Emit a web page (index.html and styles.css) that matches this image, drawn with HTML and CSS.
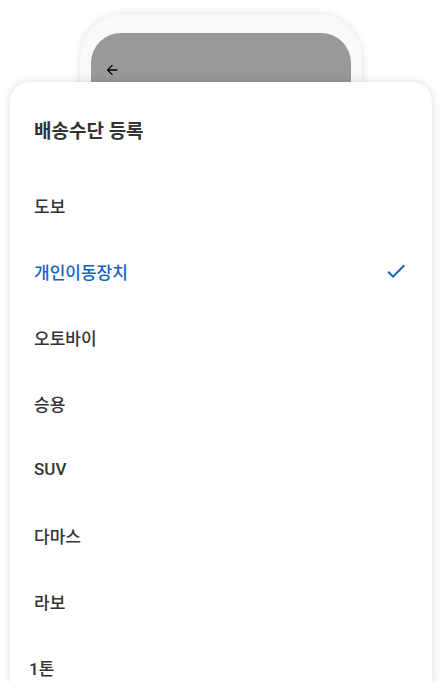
FILE: index.html
```html
<!DOCTYPE html>
<html lang="ko">
<head>
    <meta charset="UTF-8">
    <meta name="viewport" content="width=device-width, initial-scale=1.0">
    <title>배송수단 등록</title>
<link rel="stylesheet" href="styles.css">
</head>
<body>
    <div class="phone">
        <div class="screen">
            <svg class="back" viewBox="0 0 24 24" width="16" height="16">
                <path d="M20 11H7.83l5.59-5.59L12 4l-8 8 8 8 1.41-1.41L7.83 13H20v-2z"/>
            </svg>
        </div>
    </div>

    <div class="sheet">
        <h2 class="sheet-title">배송수단 등록</h2>
        <ul class="options">
            <li class="option">도보</li>
            <li class="option selected">
                <span>개인이동장치</span>
                <svg class="check" viewBox="0 0 24 24" width="24" height="24">
                    <path d="M9 16.17L4.83 12l-1.42 1.41L9 19 21 7l-1.41-1.41z"/>
                </svg>
            </li>
            <li class="option">오토바이</li>
            <li class="option">승용</li>
            <li class="option">SUV</li>
            <li class="option">다마스</li>
            <li class="option">라보</li>
            <li class="option shifted">1톤</li>
        </ul>
    </div>
</body>
</html>
```

FILE: styles.css
```css
/*page*/
body{
    margin: 0;
    height: 682px;
    overflow: hidden;
    background-color: #fff;
    font-family: Roboto, "Noto Sans CJK KR", sans-serif;
    color: #333;
}
/*phone behind the sheet*/
.phone{
    width: 282px;
    height: 300px;
    margin: 14px 0 0 80px;
    padding: 19px 11px 0;
    box-sizing: border-box;
    border-radius: 44px;
    background-color: #f9f9f9;
    box-shadow: 0 0 8px rgba(0, 0, 0, 0.12);
}
.screen{
    height: 100%;
    padding: 29px 0 0 13px;
    box-sizing: border-box;
    border-radius: 30px 30px 0 0;
    background-color: #999;
}
.back{
    display: block;
    fill: #000;
}
/*bottom sheet*/
.sheet{
    position: absolute;
    top: 82px;
    left: 10px;
    right: 10px;
    bottom: 0;
    overflow: hidden;
    padding: 36px 0 0;
    border-radius: 20px 20px 0 0;
    background-color: #fff;
    box-shadow: 0 0 10px rgba(0, 0, 0, 0.15);
}
.sheet-title{
    margin: 0 0 26px;
    padding: 0 24px;
    font-size: 19px;
    line-height: 28px;
    font-weight: 700;
    color: #333;
}
.options{
    list-style: none;
    margin: 0;
    padding: 0;
}
.option{
    display: flex;
    align-items: center;
    justify-content: space-between;
    height: 66px;
    padding: 0 24px 0 24px;
    font-size: 17px;
    font-weight: 500;
}
.option.selected{
    color: #1565c0;
}
.option.shifted{
    padding-left: 19px;
}
.check{
    fill: #1565c0;
}
```
